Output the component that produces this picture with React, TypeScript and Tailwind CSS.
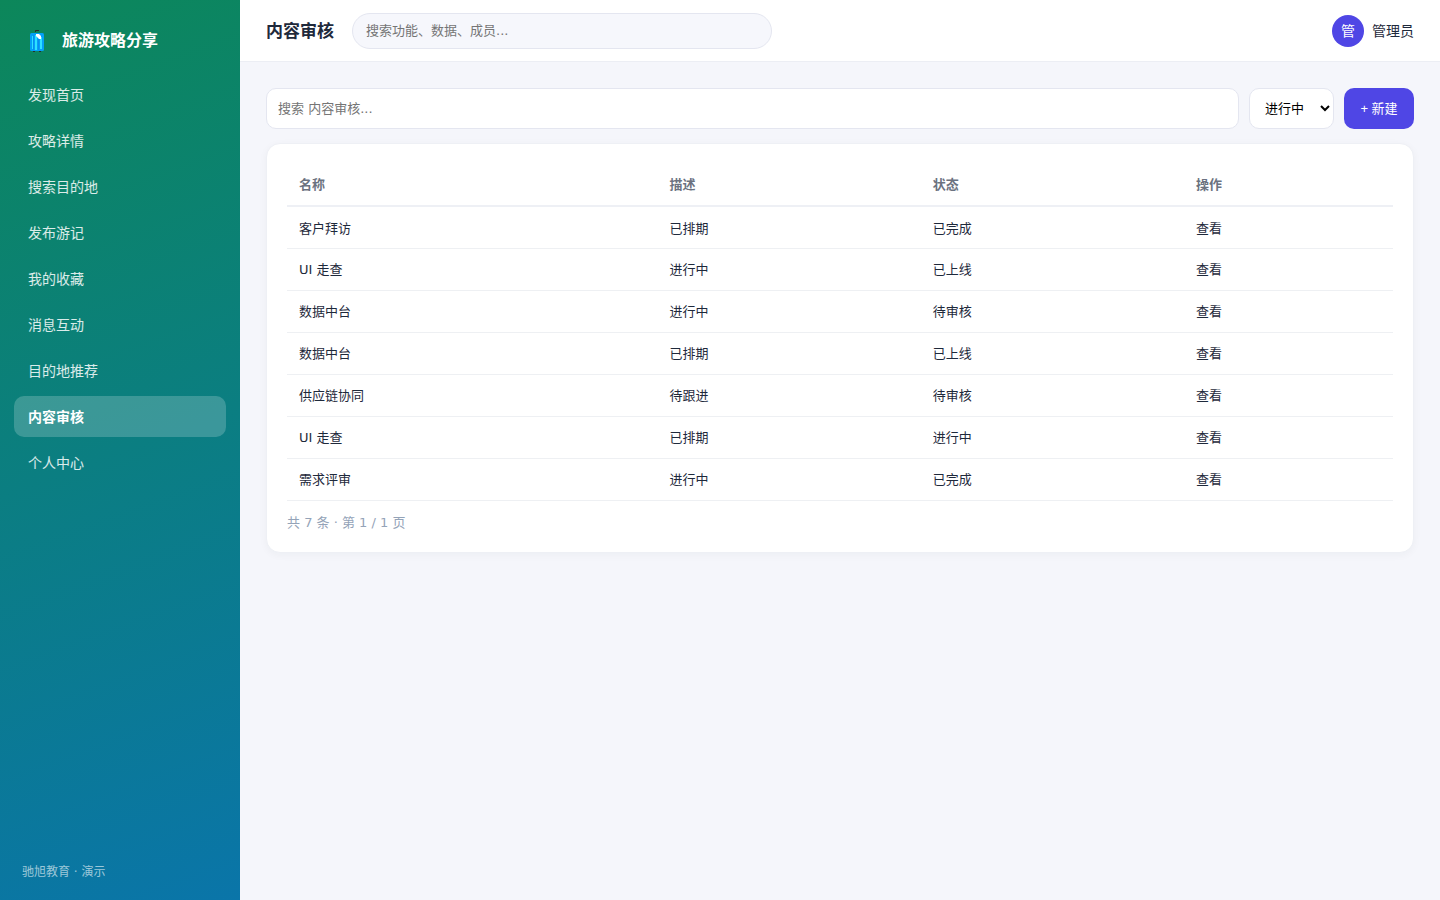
import React, { useState } from 'react';

const navItems = [
  '发现首页',
  '攻略详情',
  '搜索目的地',
  '发布游记',
  '我的收藏',
  '消息互动',
  '目的地推荐',
  '内容审核',
  '个人中心',
];

const rows = [
  { name: '客户拜访', desc: '已排期', status: '已完成' },
  { name: 'UI 走查', desc: '进行中', status: '已上线' },
  { name: '数据中台', desc: '进行中', status: '待审核' },
  { name: '数据中台', desc: '已排期', status: '已上线' },
  { name: '供应链协同', desc: '待跟进', status: '待审核' },
  { name: 'UI 走查', desc: '已排期', status: '进行中' },
  { name: '需求评审', desc: '进行中', status: '已完成' },
];

function LuggageIcon() {
  return (
    <svg width="18" height="24" viewBox="0 0 18 24" aria-hidden="true">
      {/* handle and wheels */}
      <path d="M7.5 3V1.5H11" fill="none" stroke="#2b2b2b" strokeWidth="1" />
      <path d="M5 22h2v1H5zM11 22h2v1h-2z" fill="#2b2b2b" />
      {/* shell */}
      <rect x="2" y="4" width="14" height="18" rx="1.5" fill="#03a0f6" />
      <path d="M4 7h1v13H4zM7 6h2v15H7zM12 8h2v12h-2z" fill="#2fe0ff" />
      <path d="M5 6h1v15H5zM10 10h1v11h-1z" fill="#0b8cec" />
      <path d="M8 5h3l2 2v3h-2L8 7z" fill="#ffffff" />
    </svg>
  );
}

function Sidebar({ active, onSelect }: { active: string; onSelect: (item: string) => void }) {
  return (
    <aside className="w-60 shrink-0 flex flex-col px-3.5 text-white bg-[linear-gradient(160deg,#0c875a_0%,#0a75a9_100%)]">
      <div className="flex items-center gap-4 px-3.5 pt-7 pb-5 h-[74px]">
        <LuggageIcon />
        <span className="text-base leading-6 font-bold">旅游攻略分享</span>
      </div>
      <nav className="flex flex-col gap-[5px]">
        {navItems.map(item => (
          <a
            key={item}
            href="#"
            onClick={() => onSelect(item)}
            className={`h-[41px] flex items-center px-3.5 rounded-[10px] text-sm ${
              item === active ? 'bg-white/20 text-white font-bold' : 'text-white/85'
            }`}
          >
            {item}
          </a>
        ))}
      </nav>
      <div className="mt-auto px-2 pb-[19px] text-xs leading-[18px] text-white/60">驰旭教育 · 演示</div>
    </aside>
  );
}

export default function App() {
  const [active, setActive] = useState('内容审核');

  return (
    <div className="min-h-screen flex bg-[#f5f6fb] text-[#1e293b] font-['DejaVu_Sans','Noto_Sans_CJK_SC',sans-serif]">
      <Sidebar active={active} onSelect={setActive} />
      <div className="flex-1 min-w-0">
        <header className="h-[62px] flex items-center gap-[18px] px-[26px] bg-white border-b border-[#eceef4]">
          <h1 className="pt-0.5 text-[17px] font-bold">{active}</h1>
          <input
            type="search"
            aria-label="全局搜索"
            placeholder="搜索功能、数据、成员..."
            className="w-[420px] h-9 px-[13px] rounded-full border border-[#e4e6f0] bg-[#f6f7fc] text-[13px] placeholder:text-[#757575] outline-none"
          />
          <div className="ml-auto flex items-center gap-2">
            <span className="size-8 rounded-full bg-[#4f46e5] text-white text-sm flex items-center justify-center">管</span>
            <span className="text-sm">管理员</span>
          </div>
        </header>

        <main className="p-[26px]">
          <div className="flex gap-2.5 mb-3.5">
            <input
              type="search"
              aria-label={`搜索 ${active}`}
              placeholder={`搜索 ${active}...`}
              className="flex-1 min-w-0 h-[41px] px-[11px] rounded-[10px] border border-[#e4e6f0] bg-white text-[13px] placeholder:text-[#757575] outline-none"
            />
            <select
              aria-label="状态"
              className="w-[85px] h-[41px] pl-[11px] rounded-[10px] border border-[#e4e6f0] bg-white text-[13px] text-black"
            >
              <option>进行中</option>
              <option>已完成</option>
              <option>待审核</option>
            </select>
            <button
              type="button"
              className="w-[70px] h-[41px] rounded-[10px] bg-[#4f46e5] text-white text-[13px] font-['Liberation_Sans','Noto_Sans_CJK_SC',sans-serif]"
            >
              + 新建
            </button>
          </div>

          <section className="rounded-[14px] border border-[#eef0f5] bg-white p-5 shadow-[0_2px_8px_rgba(30,41,59,0.04)]">
            <table className="w-full table-fixed border-collapse text-[13px] text-left">
              <colgroup>
                <col className="w-[33.5%]" />
                <col className="w-[23.8%]" />
                <col className="w-[23.8%]" />
                <col className="w-[18.9%]" />
              </colgroup>
              <thead>
                <tr className="h-[42px] border-b-2 border-[#eef0f5] text-[#6b7280]">
                  <th className="px-3 font-bold">名称</th>
                  <th className="px-3 font-bold">描述</th>
                  <th className="px-3 font-bold">状态</th>
                  <th className="px-3 font-bold">操作</th>
                </tr>
              </thead>
              <tbody>
                {rows.map((row, i) => (
                  <tr key={i} className="h-[42px] border-b border-[#eef0f3]">
                    <td className="px-3 pt-0.5">{row.name}</td>
                    <td className="px-3 pt-0.5">{row.desc}</td>
                    <td className="px-3 pt-0.5">{row.status}</td>
                    <td className="px-3 pt-0.5">
                      <a href="#">查看</a>
                    </td>
                  </tr>
                ))}
              </tbody>
            </table>
            <p className="mt-3 text-[13px] leading-[19px] text-[#94a3b8]">共 7 条 · 第 1 / 1 页</p>
          </section>
        </main>
      </div>
    </div>
  );
}
